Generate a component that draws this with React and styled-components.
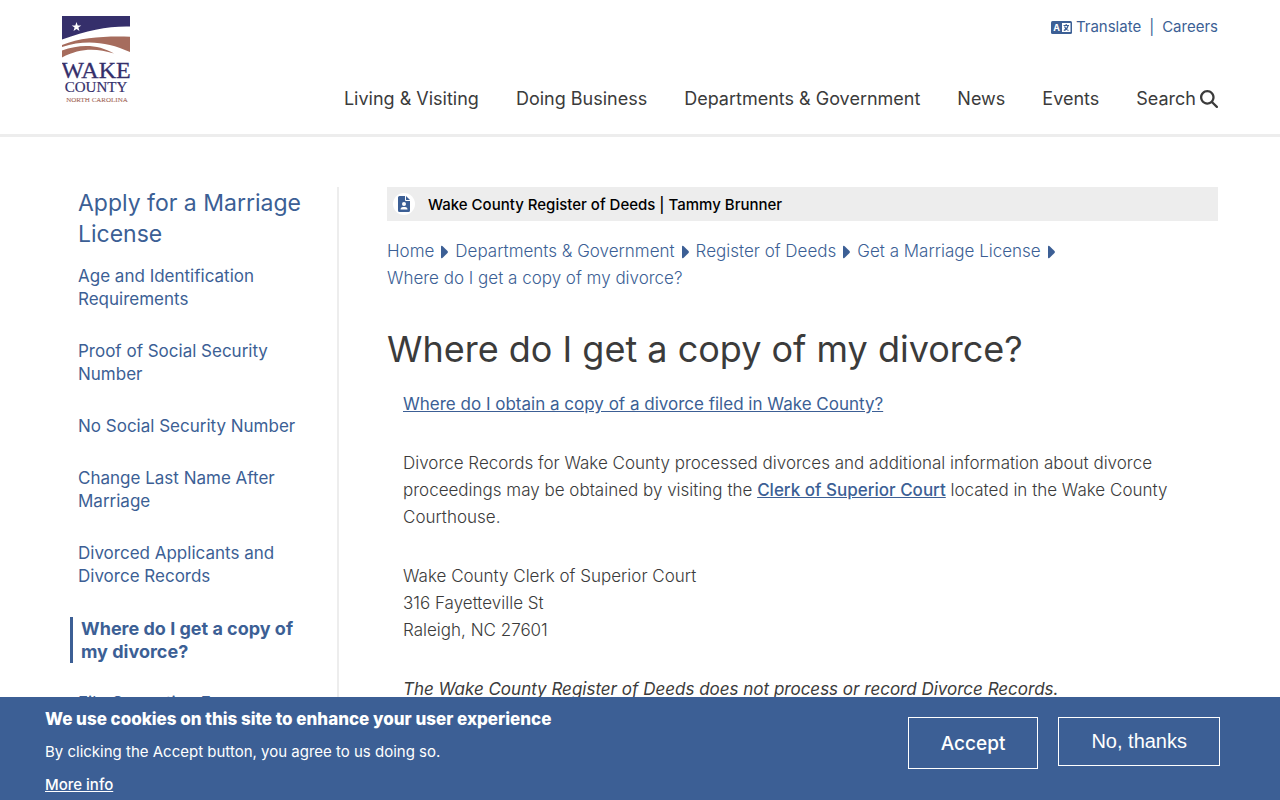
import styled, { createGlobalStyle } from 'styled-components';
import { FaMagnifyingGlass } from 'react-icons/fa6';

const GlobalStyle = createGlobalStyle`
  * {
    box-sizing: border-box;
  }

  body {
    margin: 0;
    background: #fff;
    color: #3b3b3b;
    font-family: Inter, 'Open Sans', sans-serif;
    font-size: 17px;
    line-height: 27px;
  }

  a {
    color: #3c5f95;
    text-decoration: none;
  }
`;

const Header = styled.header`
  display: flex;
  justify-content: space-between;
  height: 137px;
  padding: 16px 62px 0;
  border-bottom: 3px solid #ededed;
`;

const HeaderRight = styled.div`
  display: flex;
  flex-direction: column;
  align-items: flex-end;
  justify-content: space-between;
  padding-bottom: 23px;
`;

const UtilityLinks = styled.div`
  display: flex;
  align-items: center;
  gap: 8px;
  color: #3c5f95;
  font-size: 15px;
  line-height: 22px;

  a {
    display: flex;
    align-items: center;
    gap: 4px;
  }
`;

const MainNav = styled.nav`
  display: flex;
  gap: 37px;
  font-size: 18px;
  line-height: 24px;

  a {
    display: flex;
    align-items: center;
    gap: 4px;
    color: #3b3b3b;
  }
`;

const Page = styled.div`
  display: grid;
  grid-template-columns: 269px 1fr;
  gap: 48px;
  padding: 50px 62px 120px 70px;
`;

const Sidebar = styled.nav`
  padding-top: 1px;
  border-right: 2px solid #ededed;
`;

const SidebarTitle = styled.h2`
  margin: 0 0 15px;
  padding: 0 8px;
  font-size: 23px;
  font-weight: 400;
  line-height: 31px;
`;

const SidebarList = styled.ul`
  display: flex;
  flex-direction: column;
  gap: 29px;
  margin: 0;
  padding: 0;
  list-style: none;
`;

const SidebarItem = styled.li`
  padding: 0 32px 0 8px;
  border-left: ${({ $active }) => ($active ? '3px solid #3c5f95' : 'none')};
  font-size: ${({ $active }) => ($active ? 18 : 17)}px;
  font-weight: ${({ $active }) => ($active ? 700 : 400)};
  line-height: 23px;
`;

const DeptBar = styled.div`
  display: flex;
  align-items: center;
  gap: 13px;
  height: 34px;
  padding: 0 6px;
  background: #ededed;
  color: #000;
  font-size: 15px;
  font-weight: 500;
`;

const DeptIcon = styled.span`
  display: flex;
  align-items: center;
  justify-content: center;
  width: 22px;
  height: 22px;
  border-radius: 50%;
  background: #fff;
  color: #3c5f95;
`;

const Breadcrumb = styled.ol`
  display: flex;
  flex-wrap: wrap;
  margin: 17px 0 0;
  padding: 0;
  font-weight: 300;
  list-style: none;
`;

const Crumb = styled.li`
  display: flex;
  align-items: center;
  gap: 7px;
  margin-right: 7px;
  color: #3c5f95;
`;

const Title = styled.h1`
  margin: 32px 0 17px;
  font-size: 36px;
  font-weight: 400;
  line-height: 50px;
`;

const Body = styled.div`
  padding-left: 16px;
  font-weight: 300;

  p {
    margin: 0 0 32px;
  }

  a {
    font-weight: 400;
    text-decoration: underline;
  }

  a.strong {
    font-weight: 500;
  }

  em {
    font-weight: 400;
  }
`;

const CookieBanner = styled.section`
  position: fixed;
  right: 0;
  bottom: 0;
  left: 0;
  display: flex;
  justify-content: space-between;
  height: 103px;
  padding: 9px 60px 0 45px;
  background: #3c5f95;
  color: #fff;
  font-size: 15px;

  h2 {
    margin: 0 0 5px;
    font-size: 17px;
    font-weight: 800;
    line-height: 27px;
  }

  p {
    margin: 0 0 6px;
  }

  a {
    color: #fff;
    font-weight: 500;
    text-decoration: underline;
  }
`;

const BannerButtons = styled.div`
  display: flex;
  align-items: flex-start;
  gap: 20px;
  padding-top: 11px;
`;

const BannerButton = styled.button`
  height: ${({ $plain }) => ($plain ? 49 : 52)}px;
  padding: 0 32px;
  border: 1px solid #fff;
  background: transparent;
  color: #fff;
  font-family: ${({ $plain }) =>
    $plain ? "'Liberation Sans', sans-serif" : 'inherit'};
  font-size: ${({ $plain }) => ($plain ? 20 : 19)}px;
  font-weight: ${({ $plain }) => ($plain ? 400 : 500)};
`;

const navLinks = [
  'Living & Visiting',
  'Doing Business',
  'Departments & Government',
  'News',
  'Events',
];

const sidebarLinks = [
  'Age and Identification Requirements',
  'Proof of Social Security Number',
  'No Social Security Number',
  'Change Last Name After Marriage',
  'Divorced Applicants and Divorce Records',
  'Where do I get a copy of my divorce?',
  'File Correction Form',
];

const crumbs = [
  'Home',
  'Departments & Government',
  'Register of Deeds',
  'Get a Marriage License',
];

function Logo() {
  return (
    <svg width="70" height="88" viewBox="0 0 70 88" role="img" aria-label="Wake County North Carolina">
      <path d="M0 0H68V10.500C46 10 26 14 0 23.500Z" fill="#352f6b" />
      <path d="M14.5 6l1.2 3.4h3.6l-2.9 2.2 1.1 3.5-3-2.1-3 2.1 1.1-3.5-2.9-2.2h3.6z" fill="#fff" />
      <path d="M0 29C20 21 44 20 68 20.700V36C46 26 24 23 0 31Z" fill="#a66c5d" />
      <path d="M0 34.500C18 28 36 28 52 37.500C34 32 18 32 0 41.500Z" fill="#a66c5d" />
      <g fontFamily="'Liberation Serif', serif" textAnchor="middle">
        <text x="34" y="62" fontSize="24" fill="#352f6b" stroke="#352f6b" strokeWidth="0.3">WAKE</text>
        <text x="34" y="76" fontSize="15" fill="#352f6b" stroke="#352f6b" strokeWidth="0.2">COUNTY</text>
        <text x="35" y="86" fontSize="7" fill="#a66c5d" stroke="#a66c5d" strokeWidth="0.1">NORTH CAROLINA</text>
      </g>
    </svg>
  );
}

function TranslateIcon() {
  return (
    <svg width="21" height="13" viewBox="0 0 21 13" aria-hidden="true">
      <rect width="21" height="13" rx="1.5" fill="#3c5f95" />
      <rect x="11" y="2" width="8.500" height="9" fill="#fff" />
      <text x="5.500" y="9.500" fill="#fff" fontSize="9" fontWeight="700" textAnchor="middle">A</text>
      <path d="M12.500 4.500H18M15.200 3V4.500M13.500 5.500Q14.500 8.500 17.500 9.500M17 5Q16 8.500 12.800 9.500" fill="none" stroke="#3c5f95" strokeWidth="1.2" />
    </svg>
  );
}

function CaretIcon() {
  return (
    <svg width="7" height="14" viewBox="0 0 7 14" aria-hidden="true">
      <path d="M0 1.800Q0 0 1.400 1L6.500 6Q7.300 7 6.500 8L1.400 13Q0 14 0 12.200Z" fill="currentColor" />
    </svg>
  );
}

function FileUserIcon() {
  return (
    <svg width="12" height="16" viewBox="0 0 12 16" aria-hidden="true">
      <path d="M1.500 0H7V4Q7 5 8 5H12V14.500Q12 16 10.500 16H1.500Q0 16 0 14.500V1.500Q0 0 1.500 0Z" fill="currentColor" />
      <path d="M8 0L12 4H8Z" fill="currentColor" />
      <circle cx="6" cy="8" r="2" fill="#fff" />
      <path d="M2.500 13.500Q2.500 11 5 11H7Q9.500 11 9.500 13.500Z" fill="#fff" />
    </svg>
  );
}

function App() {
  return (
    <>
      <GlobalStyle />
      <Header>
        <a href="#home">
          <Logo />
        </a>
        <HeaderRight>
          <UtilityLinks>
            <a href="#translate">
              <TranslateIcon />
              Translate
            </a>
            <span>|</span>
            <a href="#careers">Careers</a>
          </UtilityLinks>
          <MainNav>
            {navLinks.map((label) => (
              <a href="#nav" key={label}>
                {label}
              </a>
            ))}
            <a href="#search">
              Search
              <FaMagnifyingGlass />
            </a>
          </MainNav>
        </HeaderRight>
      </Header>

      <Page>
        <Sidebar>
          <SidebarTitle>
            <a href="#apply">Apply for a Marriage License</a>
          </SidebarTitle>
          <SidebarList>
            {sidebarLinks.map((label, index) => (
              <SidebarItem key={label} $active={index === 5}>
                <a href="#item">{label}</a>
              </SidebarItem>
            ))}
          </SidebarList>
        </Sidebar>

        <main>
          <DeptBar>
            <DeptIcon>
              <FileUserIcon />
            </DeptIcon>
            Wake County Register of Deeds | Tammy Brunner
          </DeptBar>
          <Breadcrumb>
            {crumbs.map((label) => (
              <Crumb key={label}>
                <a href="#crumb">{label}</a>
                <CaretIcon />
              </Crumb>
            ))}
            <Crumb>
              <a href="#current">Where do I get a copy of my divorce?</a>
            </Crumb>
          </Breadcrumb>
          <Title>Where do I get a copy of my divorce?</Title>
          <Body>
            <p>
              <a href="#obtain">
                Where do I obtain a copy of a divorce filed in Wake County?
              </a>
            </p>
            <p>
              Divorce Records for Wake County processed divorces and additional
              information about divorce proceedings may be obtained by visiting
              the{' '}
              <a className="strong" href="#clerk">
                Clerk of Superior Court
              </a>{' '}
              located in the Wake County Courthouse.
            </p>
            <p>
              Wake County Clerk of Superior Court
              <br />
              316 Fayetteville St
              <br />
              Raleigh, NC 27601
            </p>
            <p>
              <em>
                The Wake County Register of Deeds does not process or record
                Divorce Records.
              </em>
            </p>
          </Body>
        </main>
      </Page>

      <CookieBanner>
        <div>
          <h2>We use cookies on this site to enhance your user experience</h2>
          <p>By clicking the Accept button, you agree to us doing so.</p>
          <a href="#more">More info</a>
        </div>
        <BannerButtons>
          <BannerButton type="button">Accept</BannerButton>
          <BannerButton type="button" $plain>
            No, thanks
          </BannerButton>
        </BannerButtons>
      </CookieBanner>
    </>
  );
}

export default App;
